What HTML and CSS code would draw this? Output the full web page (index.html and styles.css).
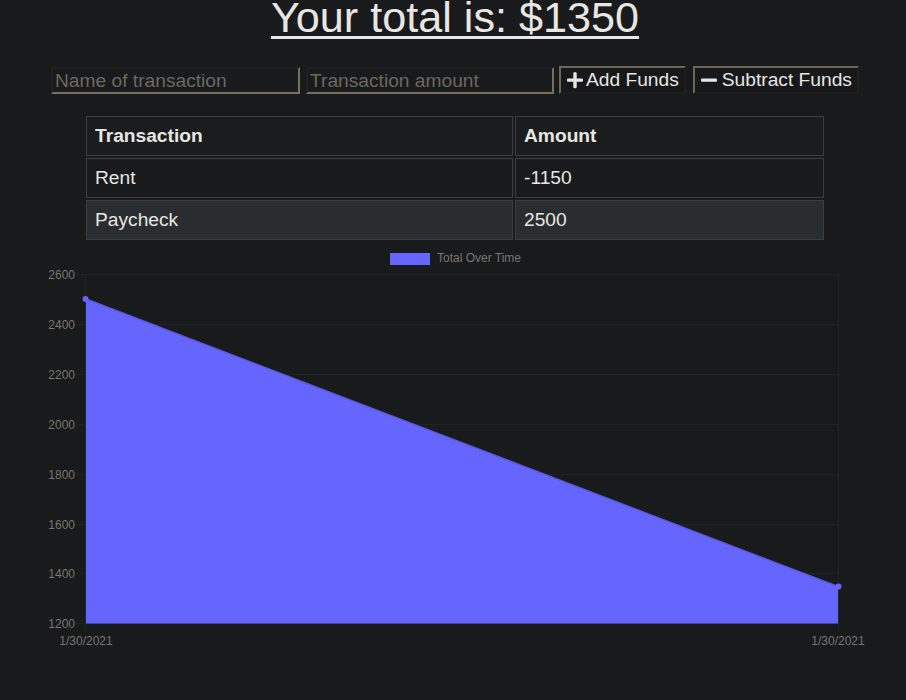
FILE: index.html
```
<!DOCTYPE html>
<html lang="en">
<head>
<meta charset="utf-8">
<title>Budget Tracker</title>
<link rel="stylesheet" href="styles.css">
</head>
<body>
<h1 class="total">Your total is: $1350</h1>
<form class="form-row">
  <input class="field field-name" type="text" placeholder="Name of transaction">
  <input class="field field-amount" type="number" placeholder="Transaction amount">
  <button class="btn btn-add" type="button"><svg class="icon" viewBox="0 0 448 512"><path d="M416 208H272V64c0-17.67-14.33-32-32-32h-32c-17.67 0-32 14.33-32 32v144H32c-17.67 0-32 14.33-32 32v32c0 17.67 14.33 32 32 32h144v144c0 17.670 14.33 32 32 32h32c17.67 0 32-14.33 32-32V304h144c17.67 0 32-14.33 32-32v-32c0-17.67-14.33-32-32-32z"/></svg><span class="btn-label">Add Funds</span></button>
  <button class="btn btn-sub" type="button"><svg class="icon" viewBox="0 0 448 512"><path d="M416 208H32c-17.67 0-32 14.33-32 32v32c0 17.67 14.33 32 32 32h384c17.67 0 32-14.33 32-32v-32c0-17.67-14.33-32-32-32z"/></svg><span class="btn-label">Subtract Funds</span></button>
</form>
<table class="tx-table">
  <thead>
    <tr><th class="col-name">Transaction</th><th class="col-amount">Amount</th></tr>
  </thead>
  <tbody>
    <tr><td>Rent</td><td>-1150</td></tr>
    <tr class="striped"><td>Paycheck</td><td>2500</td></tr>
  </tbody>
</table>
<div class="chart-wrap">
<svg class="chart" width="906" height="420" viewBox="0 244 906 420">
  <g class="grid">
    <line x1="76" y1="273.5" x2="838" y2="273.5"/>
    <line x1="76" y1="323.5" x2="838" y2="323.5"/>
    <line x1="76" y1="373.5" x2="838" y2="373.5"/>
    <line x1="76" y1="423.5" x2="838" y2="423.5"/>
    <line x1="76" y1="473.5" x2="838" y2="473.5"/>
    <line x1="76" y1="523.5" x2="838" y2="523.5"/>
    <line x1="76" y1="572.5" x2="838" y2="572.5"/>
    <line x1="76" y1="622.5" x2="838" y2="622.5"/>
    <line x1="85.5" y1="273" x2="85.5" y2="632"/>
    <line x1="838.5" y1="273" x2="838.5" y2="632"/>
  </g>
  <polygon class="area" points="86,298 838,585.5 838,622.5 86,622.5"/>
  <line class="edge" x1="86" y1="298" x2="838" y2="585.5"/>
  <circle class="pt" cx="85.5" cy="298" r="3"/>
  <circle class="pt" cx="838.5" cy="585.5" r="3"/>
  <g class="ylab">
    <text x="75" y="277.5">2600</text>
    <text x="75" y="327.5">2400</text>
    <text x="75" y="377.5">2200</text>
    <text x="75" y="427.5">2000</text>
    <text x="75" y="477.5">1800</text>
    <text x="75" y="527.5">1600</text>
    <text x="75" y="576.5">1400</text>
    <text x="75" y="626.5">1200</text>
  </g>
  <g class="xlab">
    <text x="86" y="643.5">1/30/2021</text>
    <text x="838" y="643.5">1/30/2021</text>
  </g>
  <rect class="legend-box" x="390" y="252" width="40" height="12"/>
  <text class="legend-text" x="437" y="261">Total Over Time</text>
</svg>
</div>
</body>
</html>
```
FILE: styles.css
```
html, body {
  margin: 0;
  padding: 0;
  background: #181a1b;
  color: #e8e6e3;
  font-family: "Liberation Sans", Arial, sans-serif;
}

.total {
  margin: 0;
  padding: 1px 0 0 4px;
  font-size: 43.2px;
  font-weight: normal;
  line-height: 33px;
  text-align: center;
  text-decoration: underline;
  text-decoration-thickness: 3px;
  text-underline-offset: 4px;
}

.form-row {
  display: flex;
  align-items: flex-start;
  margin: 33px 0 0 0;
  padding-left: 51px;
}

.field {
  box-sizing: border-box;
  height: 27px;
  margin: 0;
  padding: 0 2px;
  background: #181a1b;
  color: #e8e6e3;
  font-family: "Liberation Sans", Arial, sans-serif;
  font-size: 19.2px;
  border-style: solid;
  border-width: 2px;
  border-color: #1e2021 #77705f #77705f #1e2021;
  outline: none;
  -moz-appearance: textfield;
}

.field::placeholder {
  color: #6d6861;
  opacity: 1;
}

.field::-webkit-outer-spin-button,
.field::-webkit-inner-spin-button {
  -webkit-appearance: none;
  margin: 0;
}

.field-name {
  width: 249px;
}

.field-amount {
  width: 248px;
  margin-left: 6px;
}

.btn {
  box-sizing: border-box;
  display: flex;
  align-items: center;
  flex: none;
  height: 28px;
  margin: -1px 0 0 5px;
  padding: 0 5px 0 6px;
  background: #161819;
  color: #e8e6e3;
  font-family: "Liberation Sans", Arial, sans-serif;
  font-size: 19.2px;
  white-space: nowrap;
  border-style: solid;
  border-width: 2px;
  border-color: #6d6758 #1c1e1f #1c1e1f #6d6758;
  cursor: pointer;
}

.btn-sub {
  margin-left: 7px;
}

.icon {
  width: 16px;
  height: 18.3px;
  margin-right: 3px;
  fill: #e8e6e3;
  flex: none;
}

.btn-sub .icon {
  margin-right: 5px;
}

.tx-table {
  table-layout: fixed;
  width: 742px;
  margin: 20px 0 0 84px;
  border-collapse: separate;
  border-spacing: 2px;
  font-size: 19.2px;
  line-height: 22px;
}

.tx-table th,
.tx-table td {
  box-sizing: border-box;
  padding: 8px;
  border: 1px solid #3a3e41;
  text-align: left;
  white-space: nowrap;
}

.tx-table th {
  font-weight: bold;
  background: #1a1c1d;
}

.col-name {
  width: 427px;
}

.col-amount {
  width: 309px;
}

.striped td {
  background: #2a2d2f;
}

.chart-wrap {
  margin-top: 3px;
}

.chart {
  display: block;
}

.grid line {
  stroke: #202325;
  stroke-width: 1;
}

.area {
  fill: #6666ff;
}

.edge {
  stroke: #5a5ae6;
  stroke-width: 1.5;
}

.pt {
  fill: #6666ff;
}

.ylab text {
  fill: #7a756e;
  font-family: "Liberation Sans", Arial, sans-serif;
  font-size: 12px;
  text-anchor: end;
}

.xlab text {
  fill: #7a756e;
  font-family: "Liberation Sans", Arial, sans-serif;
  font-size: 12px;
  text-anchor: middle;
}

.legend-box {
  fill: #6666ff;
}

.legend-text {
  fill: #7a756e;
  font-family: "Liberation Sans", Arial, sans-serif;
  font-size: 12px;
}
```
